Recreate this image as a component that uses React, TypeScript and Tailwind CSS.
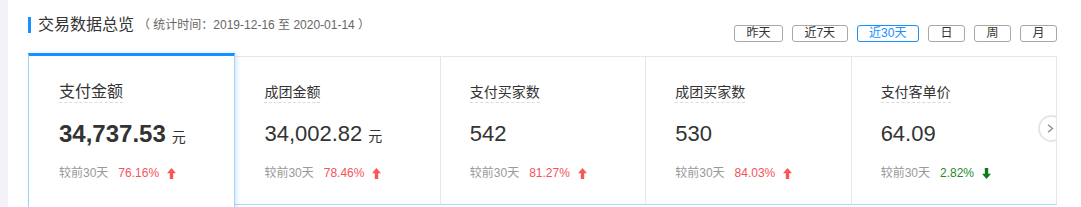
import React from "react";

const FONT = { fontFamily: '"Liberation Sans", "Noto Sans CJK SC", sans-serif' };

type Card = {
  title: string;
  value: string;
  unit?: string;
  pct: string;
  up: boolean;
};

const cards: Card[] = [
  { title: "支付金额", value: "34,737.53", unit: "元", pct: "76.16%", up: true },
  { title: "成团金额", value: "34,002.82", unit: "元", pct: "78.46%", up: true },
  { title: "支付买家数", value: "542", pct: "81.27%", up: true },
  { title: "成团买家数", value: "530", pct: "84.03%", up: true },
  { title: "支付客单价", value: "64.09", pct: "2.82%", up: false },
];

function UpArrow() {
  return (
    <svg width="9" height="11" viewBox="0 0 9 11" className="ml-[8px]">
      <path d="M4.5 0 L9 5.2 H6.2 V11 H2.8 V5.2 H0 Z" fill="#fb5656" />
    </svg>
  );
}

function DownArrow() {
  return (
    <svg width="9" height="11" viewBox="0 0 9 11" className="ml-[8px]">
      <path d="M4.5 11 L9 5.8 H6.2 V0 H2.8 V5.8 H0 Z" fill="#0f7a1c" />
    </svg>
  );
}

function CardBody({ c, active }: { c: Card; active: boolean }) {
  return (
    <>
      <div>
        <span
          className={
            "inline-block border-b border-dashed border-[#dcdcdc] text-[#333] " +
            (active ? "text-[16px] leading-[20px]" : "text-[14px] leading-[20px]")
          }
        >
          {c.title}
        </span>
      </div>
      <div className="mt-[14px] flex h-[32px] items-baseline text-[#333]">
        <span
          className={
            active
              ? "text-[24px] font-bold leading-[32px]"
              : "text-[22px] font-normal leading-[32px]"
          }
        >
          {c.value}
        </span>
        {c.unit && <span className="ml-[6px] text-[14px] leading-[20px]">{c.unit}</span>}
      </div>
      <div className="mt-[14px] flex h-[18px] items-center text-[12px] leading-[18px]">
        <span className="text-[#999]">较前30天</span>
        <span className={"ml-[10px] " + (c.up ? "text-[#f5535b]" : "text-[#1f8a2c]")}>{c.pct}</span>
        {c.up ? <UpArrow /> : <DownArrow />}
      </div>
    </>
  );
}

export default function App() {
  const ranges = ["昨天", "近7天", "近30天", "日", "周", "月"];
  return (
    <div className="flex h-[207px] w-[1081px] overflow-hidden bg-white" style={FONT}>
      <div className="h-full w-[8px] shrink-0 bg-[#f3f3f7]" />
      <div className="flex-1 pl-[20px] pr-[24px] pt-[17px]">
        <div className="flex h-[36px] items-start justify-between">
          <div className="flex h-[16px] items-center border-l-[3px] border-[#1890ff] pl-[7px]">
            <span className="text-[16px] leading-[16px] text-[#333]">交易数据总览</span>
            <span className="ml-[4px] whitespace-pre text-[12px] leading-[16px] text-[#666]">
              {"（ 统计时间：2019-12-16 至 2020-01-14 ）"}
            </span>
          </div>
          <div className="mt-[8px] flex gap-[9px]">
            {ranges.map((r) => {
              const on = r === "近30天";
              return (
                <div
                  key={r}
                  className={
                    "flex h-[17px] items-center rounded-[3px] border px-[11.5px] text-[12px] leading-[15px] " +
                    (on ? "border-[#1890ff] text-[#1890ff]" : "border-[#a8a8a8] text-[#333]")
                  }
                >
                  {r}
                </div>
              );
            })}
          </div>
        </div>
        <div className="flex items-start">
          {cards.map((c, i) => {
            const active = i === 0;
            if (active) {
              return (
                <div
                  key={i}
                  className="relative z-10 h-[160px] flex-1 basis-0 border-x border-t-[3px] border-x-[#a3d3f7] border-t-[#1890ff] bg-white pl-[30px] pt-[24px] shadow-[2px_0_4px_rgba(24,144,255,0.18)]"
                >
                  <CardBody c={c} active />
                </div>
              );
            }
            const last = i === cards.length - 1;
            return (
              <div
                key={i}
                className={
                  "mt-[3px] h-[149px] flex-1 basis-0 border-b border-r border-t border-b-[#a8d8fa] border-r-[#e6e6e6] border-t-[#e6e6e6] pl-[29px] pt-[23px] " +
                  (last ? "relative overflow-hidden" : "")
                }
              >
                <CardBody c={c} active={false} />
                {last && (
                  <div className="absolute right-[-9px] top-[58px] flex h-[27px] w-[27px] items-center rounded-full border-2 border-[#e6e6e6] bg-white pl-[7px]">
                    <svg width="7" height="9" viewBox="0 0 7 9">
                      <path d="M1 0.8 L5.5 4.5 L1 8.2" fill="none" stroke="#8c8c8c" strokeWidth="1.3" />
                    </svg>
                  </div>
                )}
              </div>
            );
          })}
        </div>
      </div>
    </div>
  );
}
